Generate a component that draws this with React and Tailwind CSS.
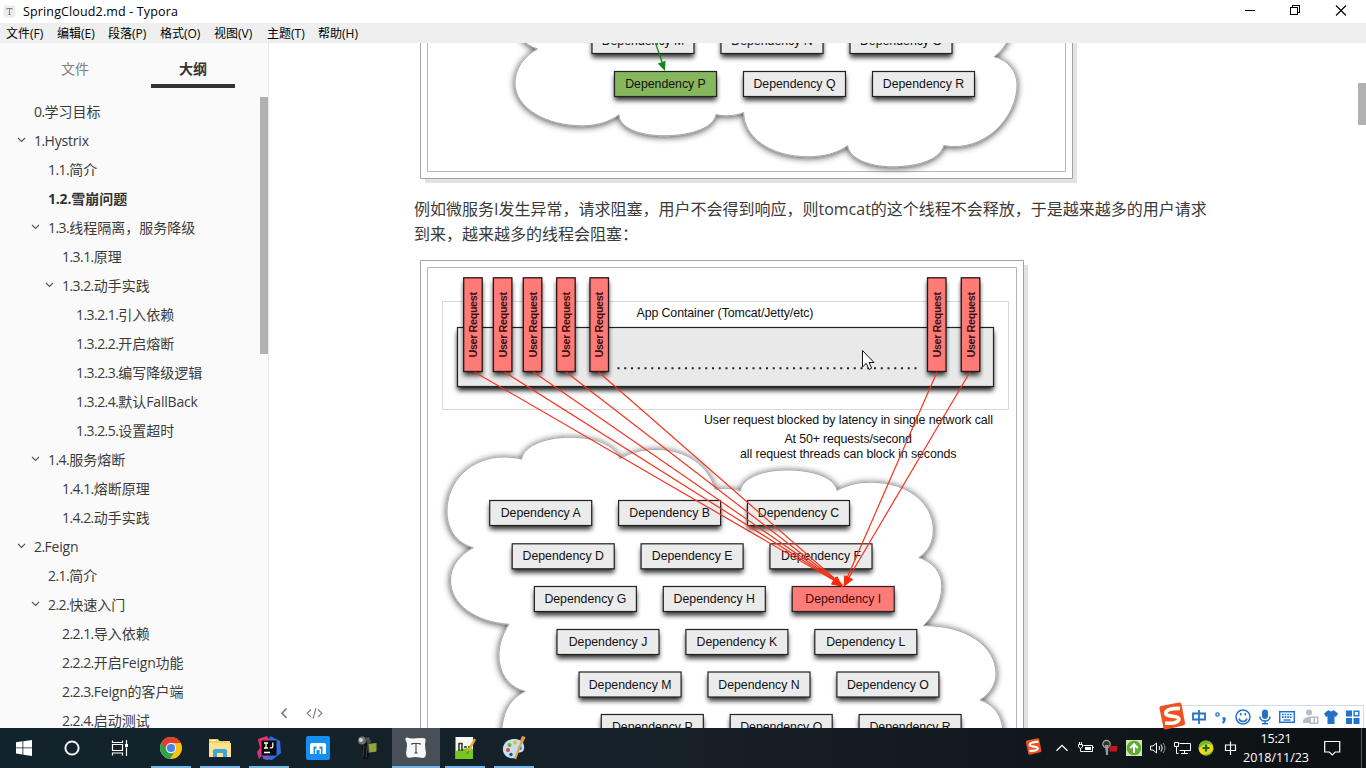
import React from "react";

const outline = [
  [0, "0.学习目标", false],
  [0, "1.Hystrix", true],
  [1, "1.1.简介", false],
  [1, "1.2.雪崩问题", false, true],
  [1, "1.3.线程隔离，服务降级", true],
  [2, "1.3.1.原理", false],
  [2, "1.3.2.动手实践", true],
  [3, "1.3.2.1.引入依赖", false],
  [3, "1.3.2.2.开启熔断", false],
  [3, "1.3.2.3.编写降级逻辑", false],
  [3, "1.3.2.4.默认FallBack", false],
  [3, "1.3.2.5.设置超时", false],
  [1, "1.4.服务熔断", true],
  [2, "1.4.1.熔断原理", false],
  [2, "1.4.2.动手实践", false],
  [0, "2.Feign", true],
  [1, "2.1.简介", false],
  [1, "2.2.快速入门", true],
  [2, "2.2.1.导入依赖", false],
  [2, "2.2.2.开启Feign功能", false],
  [2, "2.2.3.Feign的客户端", false],
  [2, "2.2.4.启动测试", false],
];

const indents = ["pl-[16px]", "pl-[30px]", "pl-[44px]", "pl-[58px]"];

const menus = [
  ["文件(F)", "w-[51px]"],
  ["编辑(E)", "w-[51px]"],
  ["段落(P)", "w-[52px]"],
  ["格式(O)", "w-[54px]"],
  ["视图(V)", "w-[53px]"],
  ["主题(T)", "w-[51px]"],
  ["帮助(H)", "w-[51px]"],
];

function Mixed({ text, bold }) {
  return text.split(/([0-9.]+|[A-Za-z]+)/).map((part, i) =>
    i % 2 ? (
      <span key={i} className={bold ? "tracking-[-0.2px]" : /[A-Z]/.test(part) ? "tracking-[-0.2px]" : "tracking-[-0.55px]"}>
        {part}
      </span>
    ) : (
      part
    )
  );
}

function TitleBar() {
  return (
    <header className="flex h-[23px] shrink-0 items-center bg-white pl-[3px]">
      <svg width="13" height="13" viewBox="0 0 13 13">
        <rect x="0.5" y="0.5" width="12" height="12" rx="2" fill="#ececec" />
        <path d="M3.8 4.600V3.500h5.400v1.100M6.500 3.500v6M5.300 9.500h2.400" fill="none" stroke="#777" strokeWidth="0.9" />
      </svg>
      <span className="ml-[7px] flex-1 text-[12.5px] leading-[23px] tracking-[0.14px] text-black">SpringCloud2.md - Typora</span>
      <svg width="116" height="23" viewBox="1240 0 116 23" fill="none" stroke="#000" shapeRendering="crispEdges" className="mr-[10px]">
        <path d="M1245 10.500h10" />
        <path d="M1290.500 7.500h7v7h-7zM1292.500 7.500v-2h7v7h-2" />
        <path d="M1336 5.500l10 10M1346 5.500l-10 10" shapeRendering="auto" strokeWidth="1.100" />
      </svg>
    </header>
  );
}

function MenuBar() {
  return (
    <nav className="flex h-[20px] shrink-0 items-center bg-[#efefef] pt-px pl-[6px] text-[12px] leading-[20px] text-black">
      {menus.map(([t, w]) => (
        <span key={t} className={"whitespace-nowrap " + w}>
          {t}
        </span>
      ))}
    </nav>
  );
}

function Sidebar() {
  return (
    <aside className="flex w-[269px] shrink-0 flex-col border-r border-[#e7e7e7] bg-[#fafafa] text-[#3a3a3a]">
      <div className="flex h-[54px] shrink-0 pl-[33px] text-[14px]">
        <div className="flex h-[45px] w-[84px] items-center justify-center pt-[6px] text-[#808080]">文件</div>
        <div className="ml-[34px] flex h-[45px] w-[84px] items-center justify-center border-b-[4px] border-[#333] pt-[9px] font-bold text-[#333]">
          大纲
        </div>
      </div>
      <div className="flex min-h-0 flex-1 overflow-hidden">
        <div className="flex-1">
          {outline.map(([d, t, open, active]) => (
            <div key={t} className={"flex h-[29px] items-center whitespace-nowrap text-[14px] leading-[29px] " + indents[d]}>
              <span className="w-[18px] shrink-0">
                {open && (
                  <svg width="10" height="8" viewBox="0 0 10 8" className="-mt-[2px] block">
                    <path d="M2 2l3.500 3.500L9 2" fill="none" stroke="#555" strokeWidth="1.100" />
                  </svg>
                )}
              </span>
              <span className={active ? "font-bold text-[#333]" : ""}>
                <Mixed text={t} bold={active} />
              </span>
            </div>
          ))}
        </div>
        <div className="h-[257px] w-[8px] bg-[#b1b1b1]" />
      </div>
    </aside>
  );
}

function Box({ x, y, name, fill = "#ebebeb", text = "#111" }) {
  return (
    <g>
      <rect x={x} y={y} width="102" height="25" fill="#000" opacity="0.8" filter="url(#drop)" />
      <rect x={x} y={y} width="102" height="25" fill={fill} stroke="#222" strokeWidth="1.200" />
      <text x={x + 51} y={y + 16.5} fontSize="12.300" textAnchor="middle" fill={text}>
        {"Dependency " + name}
      </text>
    </g>
  );
}

function Filters() {
  return (
    <defs>
      <filter id="drop" x="-20%" y="-40%" width="140%" height="200%">
        <feOffset dy="4" />
        <feGaussianBlur stdDeviation="2.500" />
      </filter>
      <filter id="cloud" x="-10%" y="-10%" width="120%" height="120%">
        <feDropShadow dx="0" dy="1" stdDeviation="3.600" floodColor="#000" floodOpacity="0.750" />
      </filter>
    </defs>
  );
}

function DiagramTop() {
  return (
    <svg width="660" height="140" viewBox="420 43 660 140" className="ml-[6px] block font-['Liberation_Sans',sans-serif]">
      <Filters />
      <path d="M1073 43h4v140H425v-4h648z" fill="#e2e2e2" />
      <path d="M420.500 40v138.500h652V40" fill="#fff" stroke="#a3a3a3" />
      <path d="M427.500 40v131.500h638V40" fill="none" stroke="#b5b5b5" />
      <path
        d="M512 20C514 32 524 45 537.500 49C524 56 515 69 515 83C515 108 546 125.700 582 125.700C597 125.700 609 122 619 114.700C619 127 638 135.700 664 135.700C693 135.700 714 127 716 114.500C725 116.500 735 116 743.700 112.500C743.700 137 770 156.700 808 156.700C824 156.700 838 153 847.700 145.500C849 158 868 166.700 892.700 166.700C921 166.700 941 158 943.700 145.500C985 153 1017 117 1017 85C1017 71 1008 60 994 56.700C1003 50 1010 42 1013 20Z"
        fill="#fff"
        stroke="#aaa"
        strokeWidth="1"
        filter="url(#cloud)"
      />
      <Box x={592} y={28.5} name="M" />
      <Box x={721} y={28.5} name="N" />
      <Box x={850} y={28.5} name="O" />
      <Box x={614.5} y={71.5} name="P" fill="#86b75d" />
      <Box x={743.5} y={71.5} name="Q" />
      <Box x={872.5} y={71.5} name="R" />
      <path d="M655.500 43l6.500 19" stroke="#0e8a16" strokeWidth="1.300" />
      <path d="M665 71l-7.200-7.500 7.700-2.800z" fill="#0e8a16" />
    </svg>
  );
}

const rows = [
  [489.7, 500.5, "ABC"],
  [512.2, 543.8, "DEF"],
  [534.4, 586.5, "GHI"],
  [557, 629.5, "JKL"],
  [579.1, 672, "MNO"],
  [601.3, 714.5, "PQR"],
];
const requests = [463.7, 493.4, 523.3, 556.7, 590, 927.5, 961.3];
const calls = [
  [474.5, 842],
  [504.5, 842],
  [533.5, 842],
  [566, 842],
  [598.5, 842],
  [937, 844],
  [970, 844.5],
];

function DiagramMain() {
  return (
    <svg width="610" height="468" viewBox="420 260 610 468" className="mt-[13px] ml-[6px] block font-['Liberation_Sans',sans-serif]">
      <path d="M1024 265h4v470h-4z" fill="#e2e2e2" />
      <path d="M420.500 740V260.500h603V740" fill="#fff" stroke="#a3a3a3" />
      <path d="M427.500 740V267.500h589V740" fill="none" stroke="#b5b5b5" />
      <rect x="442.500" y="301.500" width="566" height="108" fill="#fff" stroke="#d9d9d9" />
      <rect x="457.500" y="327.500" width="536" height="59" opacity="0.900" filter="url(#drop)" />
      <rect x="457.500" y="327.500" width="536" height="59" fill="#e9e9e9" stroke="#222" strokeWidth="1.200" />
      <path
        d="M502 745C500 715 508 700 525.300 691.300C508 687 499 673 499 655C499 644 503 633 509 624.300C476 622 450.500 605 450.500 580C450.500 567 459 555 473.300 547.700C456 543 447 529 447 511C447 481 471 457 504 457C510 457 516 457.700 521.700 459.200C523 447 543 437.300 570 437.300C596 437.300 614 445 620 458.700C631 452 643 449.500 656 449.500C687 449.500 709 466 715 489.300C724 487.500 732 488 740.500 491C742 478 762 470 787 470C814 470 835 478 837 490.500C850 483.500 860 482.300 871 482.300C908 482.300 933.300 503 933.300 530C933.300 542 928 552 918.800 557.500C933 562 941.700 572 941.700 586C941.700 601 935 615 923.300 625.700C966 625 996 646 996 674C996 684 990 694 980 700C996 706 1004 716 1004 745Z"
        fill="#fff"
        stroke="#aaa"
        strokeWidth="1"
        filter="url(#cloud)"
      />
      <g fill="#111" fontSize="12.400">
        <text x="636.500" y="317.300" textLength="177">App Container (Tomcat/Jetty/etc)</text>
        <text x="704" y="424" textLength="289">User request blocked by latency in single network call</text>
        <text x="784.500" y="443.300" textLength="127.500">At 50+ requests/second</text>
        <text x="740" y="457.700" textLength="216.500">all request threads can block in seconds</text>
      </g>
      <path d="M617.500 368.300H918" stroke="#222" strokeWidth="2" strokeDasharray="2 4.750" />
      {rows.map(([x, y, names]) =>
        names.split("").map((n, i) => (
          <Box key={n} x={x + i * 128.9} y={y} name={n} fill={n === "I" ? "#ff7b78" : "#ebebeb"} text={n === "I" ? "#3c0d0d" : "#111"} />
        ))
      )}
      {requests.map((x) => (
        <g key={x}>
          <rect x={x} y="277.800" width="18.500" height="93.700" opacity="0.800" filter="url(#drop)" />
          <rect x={x} y="277.800" width="18.500" height="93.700" fill="#ff7b78" stroke="#2a1414" strokeWidth="1.300" />
          <text
            transform={"translate(" + (x + 13.3) + " 357.5) rotate(-90)"}
            fontSize="10.800"
            fontWeight="bold"
            textLength="65.500"
            fill="#3a1010"
          >
            User Request
          </text>
        </g>
      ))}
      {calls.map(([x, tx]) => {
        const a = (Math.atan2(586.5 - 372, tx - x) * 180) / Math.PI;
        return (
          <g key={x}>
            <path d={"M" + x + " 372L" + tx + " 585"} stroke="#f5331d" strokeWidth="1.200" />
            <path d="M1 0L-10 -4.200V4.200Z" fill="#ff2a0c" transform={"translate(" + tx + " 586) rotate(" + a + ")"} />
          </g>
        );
      })}
      <path d="M862.500 350.500v16.500l3.800-3.600 2.800 6 2.600-1.200-2.700-5.700h5z" fill="#fff" stroke="#111" strokeWidth="1" />
    </svg>
  );
}

function SogouMark({ size, className }) {
  return (
    <svg width={size} height={size} viewBox="0 0 28 28" className={className}>
      <path d="M1.500 6.500Q1 4.500 3 4L21 .6Q23 .3 23.500 2.300L27 21Q27.300 23 25.300 23.500L8 27.400Q6 27.800 5.400 25.800z" fill="#ee5220" />
      <path d="M22 6.500C15 6 7.500 7.500 7.700 11.500c.3 4 13 1.500 13.200 5.300C21 20.500 14 22 7 21" fill="none" stroke="#fff" strokeWidth="3.600" />
    </svg>
  );
}

function ImeBar() {
  return (
    <div className="absolute top-[702px] left-[1157px] flex h-[27px] w-[209px] items-end">
      <div className="mb-px ml-[15px] flex h-[23px] w-[192px] items-center border-t border-r border-[#cfdbe8] bg-white pl-[15px]">
        <svg width="176" height="22" viewBox="1187 706 176 22" fill="none" stroke="#2173c9" strokeWidth="1.800">
          <path d="M1193 713.500h12v6h-12zM1199 710v14" />
          <circle cx="1217.500" cy="714.500" r="1.700" strokeWidth="1.300" />
          <path d="M1224.500 718.500c.5 2-.5 3.500-2 4.500" strokeWidth="2" />
          <circle cx="1224" cy="718.500" r="1.600" fill="#2173c9" stroke="none" />
          <circle cx="1243" cy="717" r="7" strokeWidth="1.500" />
          <path d="M1239 718.500c1 4 7 4 8 0M1240.700 713v2.500M1245.300 713v2.500" strokeWidth="1.500" />
          <rect x="1262" y="709.500" width="6" height="9.500" rx="3" fill="#2173c9" stroke="none" />
          <path d="M1260 716.500c0 6 10 6 10 0M1265 721v3M1262 723.800h6" strokeWidth="1.500" />
          <rect x="1279.700" y="711.700" width="14.600" height="10.600" strokeWidth="1.500" />
          <path d="M1282 714.500h10M1282 717.200h10" strokeWidth="1.700" strokeDasharray="1.700 .9" />
          <path d="M1283.500 720h7" strokeWidth="1.400" />
          <g fill="#b4bcc8" stroke="none">
            <circle cx="1309" cy="712.500" r="3" />
            <path d="M1303 723v-2c0-2 3-4 6-4h1v6z" />
            <path d="M1309.500 716.500h9v7.500h-9zM1311 718v4.500h2.500V718zM1315 718v4.500h2V718z" fillRule="evenodd" />
          </g>
          <path d="M1324 713.500l4.500-3.500c1 1.700 4 1.700 5 0l4.500 3.500-2 3.500-1.500-.8v7.800h-7v-7.800l-1.500.8z" fill="#2173c9" stroke="none" />
          <path d="M1346 710.500h6v6h-6zM1346 718h6v6h-6zM1353.500 718h6v6h-6z" fill="#2173c9" stroke="none" />
          <rect x="1354.200" y="711.200" width="4.600" height="4.600" strokeWidth="1.400" />
        </svg>
      </div>
      <SogouMark size="28" className="absolute top-0 left-px" />
    </div>
  );
}

const appIcons = [
  <svg key="chrome" width="24" height="24" viewBox="0 0 24 24">
    <circle cx="12" cy="12" r="11" fill="#fbc116" />
    <path d="M12 12L2.500 6.500A11 11 0 0 0 11 23l5-8z" fill="#2fa24f" />
    <path d="M12 7h9.800A11 11 0 0 0 2.500 6.500L7.500 14z" fill="#e0402f" />
    <circle cx="12" cy="12" r="5.200" fill="#f4f4f4" />
    <circle cx="12" cy="12" r="4.100" fill="#4a83ea" />
  </svg>,
  <svg key="explorer" width="24" height="24" viewBox="0 0 24 24">
    <path d="M1 3h9l1.500 2H22v16H1z" fill="#f4cf65" />
    <path d="M1 7h22v14H1z" fill="#fbe391" />
    <path d="M5 21v-6q0-2 2-2h10q2 0 2 2v6h-4v-4H9v4z" fill="#3fa4d8" />
    <path d="M3 4.500h5" stroke="#fff" />
  </svg>,
  <svg key="idea" width="26" height="26" viewBox="0 0 26 26">
    <path d="M2 4l9-3 5 8-8 9-5 6-2-7 3-4z" fill="#e8316e" />
    <path d="M14 1l10 5 1 12-9 7-9-1z" fill="#2f6bdc" />
    <path d="M3 17l5 7 4 1 1-8z" fill="#8a4ed2" />
    <rect x="5.500" y="5.500" width="15" height="15" fill="#0a0a0a" />
    <path d="M8 8h4M10 8v5M8 13h4M16.800 7.400v4.100q0 1.700-3 1.400M8 17.500h6" stroke="#fff" strokeWidth="1.300" fill="none" />
  </svg>,
  <svg key="maxthon" width="24" height="24" viewBox="0 0 24 24">
    <rect width="24" height="24" rx="2" fill="#168ff2" />
    <path d="M4 18V9q0-2 2-2h12q2 0 2 2v9h-3.500v-7.500h-3V14h-3v-3.500h-3V18z" fill="#fff" />
    <path d="M9.800 18v-4.500h4.400V18" fill="none" stroke="#fff" strokeWidth="1.600" />
    <path d="M10.600 18v-3.800h2.800V18z" fill="#168ff2" />
  </svg>,
  <svg key="camera" width="24" height="24" viewBox="0 0 24 24">
    <path d="M7 6l6-2 3 5-3 14H8z" fill="#0b0c0d" />
    <circle cx="7" cy="4.500" r="4" fill="#6a7173" />
    <circle cx="6" cy="4" r="2" fill="#ced3d3" />
    <path d="M10 2l4-1 2 5-3 3z" fill="#4a4f51" />
    <path d="M9 9l-1 12M12 10l-1 12" stroke="#3d4344" />
    <path d="M12 8l8-1 1 9-8 1z" fill="#3a4326" />
    <path d="M13.500 8l8-1v8.500l-7 1z" fill="#93a240" />
  </svg>,
  <svg key="typora" width="24" height="24" viewBox="0 0 24 24">
    <path d="M3 1.500q4 1.500 9 .8 5-.8 8.500 0 1.500.5 1 2.500-1.200 4.500 0 9t-.5 7.200q-1.500 1.500-5 .5-5-1-9 0t-4.500-1.500q-.8-3 .2-8t-1.200-8Q1 1.500 3 1.500z" fill="#f7f7f7" />
    <path d="M8 9V7.500h8V9M12 7.500v9.500M10.300 17h3.400" fill="none" stroke="#444" strokeWidth="1.100" />
  </svg>,
  <svg key="notepad" width="24" height="24" viewBox="0 0 24 24">
    <path d="M2.500 1H20v22H2.500z" fill="#f5f8ef" />
    <path d="M3 15q8-4 17-2v10H3z" fill="#78c623" />
    <path d="M6 7v8M9 7v8M6 7.500h3M11 11h3M15 11h3" stroke="#28312a" strokeWidth="1.500" fill="none" />
    <path d="M22 3L15 16" stroke="#e8ad24" strokeWidth="2.500" />
    <path d="M15.800 14.800l-1.600 3" stroke="#76501c" />
  </svg>,
  <svg key="paint" width="26" height="26" viewBox="0 0 26 26">
    <path d="M2 16C1 9 7 3 15 4c6 1 9 5 8 10-1 4-4 3-6 4s0 4-4 5C8 24 3 21 2 16z" fill="#c5dfef" />
    <circle cx="7" cy="15" r="2" fill="#d84e3d" />
    <circle cx="8.500" cy="10" r="2" fill="#74aa35" />
    <circle cx="14" cy="7.500" r="2" fill="#edb72e" />
    <circle cx="19" cy="13" r="2" fill="#3f83cb" />
    <circle cx="10" cy="19.500" r="1.700" fill="#304b5c" />
    <path d="M20.500 7L14 24" stroke="#dfa15a" strokeWidth="2.200" />
    <path d="M19 6l2-5 3.500 1L22 8z" fill="#e19750" />
  </svg>,
];
const underline = [
  "ml-[4px] w-[40px]",
  "ml-[4px] w-[40px]",
  "ml-[4px] w-[40px]",
  "w-0",
  "w-0",
  "w-[48px]",
  "ml-[4px] w-[40px]",
  "ml-[4px] w-[40px]",
];

function Cell({ children, className = "w-[48px]" }) {
  return <div className={"flex h-full items-center justify-center " + className}>{children}</div>;
}

function Taskbar() {
  return (
    <footer className="flex h-[40px] shrink-0 bg-linear-to-r from-[#11232c] via-[#172027] to-[#0c1013] text-white">
      <Cell>
        <svg width="16" height="16" viewBox="0 0 16 16" fill="#fff">
          <path d="M0 2.300l6.500-1v6.200H0zM7.300 1.200L16 0v7.500H7.300zM0 8.300h6.500v6.200L0 13.600zM7.300 8.300H16V16l-8.700-1.300z" />
        </svg>
      </Cell>
      <Cell>
        <svg width="16" height="16" viewBox="0 0 16 16">
          <circle cx="8" cy="8" r="6.600" fill="none" stroke="#f2f2f2" strokeWidth="2" />
        </svg>
      </Cell>
      <Cell>
        <svg width="18" height="16" viewBox="0 0 18 16" fill="none" stroke="#fff" strokeWidth="1.200">
          <path d="M1.500 .5v2h10v-2M1.500 15.500v-2.500h10v2.500M1.500 4.500h10v6h-10zM15.500 0v4M15.500 7.500V16" />
          <path d="M14 4h3v3h-3z" fill="#fff" stroke="none" />
        </svg>
      </Cell>
      <div className="ml-[3px] flex gap-px">
        {appIcons.map((icon, i) => (
          <div key={i} className={"flex w-[48px] flex-col " + (i === 5 ? "bg-[#465056]" : "")}>
            <div className="flex h-[38px] items-center justify-center pt-px">{icon}</div>
            <div className={"h-[2px] bg-[#76b5e8] " + underline[i]} />
          </div>
        ))}
      </div>
      <div className="flex-1" />
      <Cell className="mr-[5px] w-[24px] pb-[3px]">
        <SogouMark size="17" />
      </Cell>
      <Cell className="w-[24px]">
        <svg width="14" height="8" viewBox="0 0 14 8">
          <path d="M1.500 6.800L7 1.300l5.500 5.500" fill="none" stroke="#fff" strokeWidth="1.300" />
        </svg>
      </Cell>
      <Cell className="w-[24px]">
        <svg width="16" height="14" viewBox="0 0 16 14" fill="none" stroke="#fff">
          <path d="M5.500 4.500h9v6h-9M14.500 6.500h1.500M.5 3.500h4v2.500l-2 1.500-2-1.500zM1.500 1v2M3.500 1v2M2.500 7.500v3h3" />
          <path d="M7 6h6v3H7z" fill="#fff" stroke="none" />
        </svg>
      </Cell>
      <Cell className="w-[24px]">
        <svg width="16" height="18" viewBox="0 0 16 18">
          <circle cx="4.500" cy="5" r="3.700" fill="#333" stroke="#aaa" strokeWidth="1.200" />
          <path d="M3 6l1 10h2l.5-10z" fill="#999" />
          <path d="M7.500 7h7.500v5.500H7.500z" fill="#c5161d" />
        </svg>
      </Cell>
      <Cell className="w-[24px]">
        <svg width="16" height="16" viewBox="0 0 16 16">
          <rect width="16" height="16" fill="#cfe8b4" />
          <circle cx="8" cy="8" r="7.300" fill="#62ab35" />
          <path d="M8 13V4.500M4.300 8L8 4.200 11.700 8" fill="none" stroke="#fff" strokeWidth="2" />
        </svg>
      </Cell>
      <Cell className="w-[24px]">
        <svg width="16" height="14" viewBox="0 0 16 14" fill="none" stroke="#fff">
          <path d="M.5 5h2.500L6.500 2v10L3 9H.5zM9 5q1.500 2 0 4M11 3.500q2.600 3.500 0 7" />
          <path d="M13 2q4 5 0 10" stroke="#999" />
        </svg>
      </Cell>
      <Cell className="w-[24px]">
        <svg width="17" height="14" viewBox="0 0 17 14" fill="none" stroke="#fff">
          <path d="M5.500 2.500h11v7h-11M10.500 9.500v3M7 12.500h7M.5 1.500h4v4h-4zM2.500 5.500v7h2" />
        </svg>
      </Cell>
      <Cell className="w-[24px]">
        <svg width="16" height="16" viewBox="0 0 16 16">
          <circle cx="8" cy="8" r="7.500" fill="#f0d41e" />
          <path d="M1 5.500A7.500 7.500 0 0 1 15 5.500Q8 1 1 8z" fill="#63bf31" />
          <path d="M15.500 8a7.500 7.500 0 0 1-11 6.600Q13 15 15.500 8z" fill="#63bf31" />
          <path d="M8 4.500v7M4.500 8h7" stroke="#176b20" strokeWidth="2.200" />
        </svg>
      </Cell>
      <Cell className="w-[24px]">
        <svg width="13" height="14" viewBox="0 0 13 14" fill="none" stroke="#fff" strokeWidth="1.200">
          <path d="M1.500 4h10v5.500h-10zM6.500 .5V14" />
        </svg>
      </Cell>
      <div className="flex w-[68px] flex-col items-center text-[12.5px] leading-[19px]">
        <span className="mt-px tracking-[-0.2px]">15:21</span>
        <span className="tracking-[-0.05px]">2018/11/23</span>
      </div>
      <Cell className="w-[44px]">
        <svg width="17" height="16" viewBox="0 0 17 16" className="ml-px">
          <path d="M.7 1.500h15v10.500h-4.500L8.300 15l-3-3H.7z" fill="none" stroke="#fff" strokeWidth="1.200" />
        </svg>
      </Cell>
      <div className="mr-[4px] ml-[7px] w-px bg-[#50565a]" />
    </footer>
  );
}

export default function App() {
  return (
    <div className="relative flex h-[768px] w-[1366px] flex-col overflow-hidden bg-white font-['Open_Sans','Noto_Sans_CJK_SC',sans-serif]">
      <TitleBar />
      <MenuBar />
      <div className="flex h-[685px] shrink-0 overflow-hidden">
        <Sidebar />
        <main className="relative flex-1 overflow-hidden bg-white pl-[145px]">
          <DiagramTop />
          <p className="mt-[14px] text-[16px] leading-[25px] whitespace-nowrap text-[#3a3a3a]">
            例如微服务I发生异常，请求阻塞，用户不会得到响应，则tomcat的这个线程不会释放，于是越来越多的用户请求
            <br />
            到来，越来越多的线程会阻塞：
          </p>
          <DiagramMain />
          <svg width="44" height="14" viewBox="279 706 44 14" fill="none" stroke="#777" className="absolute bottom-[8px] left-[10px]">
            <path d="M286.500 708.500l-4.500 4.700 4.500 4.700" strokeWidth="1.600" />
            <path d="M311 709.500l-3.800 3.700 3.800 3.700M318 709.500l3.800 3.700-3.800 3.700M316 708l-3 10.500" strokeWidth="1.100" />
          </svg>
          <div className="absolute top-[40px] right-0 h-[42px] w-[8px] bg-[#b1b1b1]" />
        </main>
      </div>
      <Taskbar />
      <ImeBar />
    </div>
  );
}
